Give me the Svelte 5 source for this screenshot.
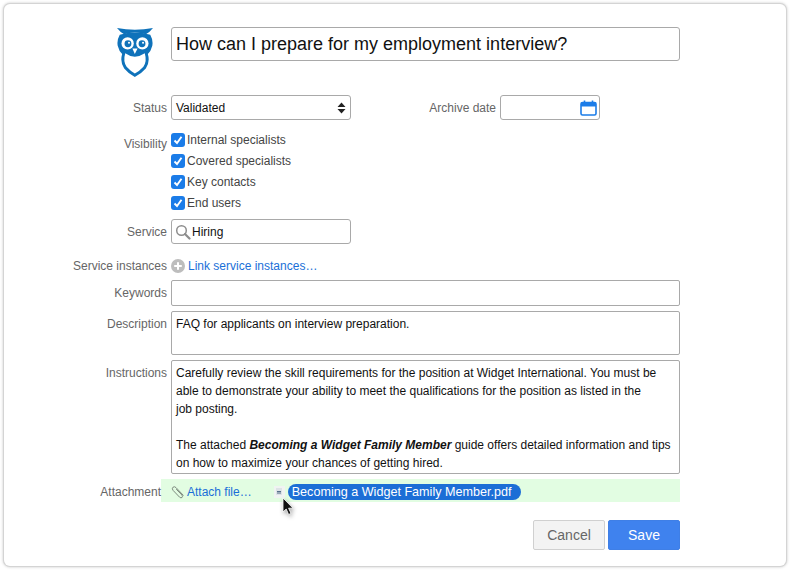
<script>
  let title = 'How can I prepare for my employment interview?';
  const audiences = ['Internal specialists', 'Covered specialists', 'Key contacts', 'End users'];
</script>

<div class="sheet">
  <div class="head">
    <svg class="owl" viewBox="0 0 105 143" aria-hidden="true">
      <path d="M0 0 Q52 10 105 0 Q96 12 84 18 Q52 8 21 18 Q9 12 0 0Z" fill="#0f72ba" />
      <path d="M8 20 Q52 6 97 20 Q106 36 103 52 Q99 68 90 76 Q97 100 84 118 Q70 134 52 143 Q34 134 21 118 Q8 100 15 76 Q6 68 2 52 Q-1 36 8 20Z" fill="#0f72ba" />
      <path d="M24 74 Q38 84 52 84 Q66 84 81 74 Q88 98 77 113 Q65 126 52 133 Q40 126 28 113 Q17 98 24 74Z" fill="#fff" />
      <circle cx="31" cy="45" r="18" fill="#fff" />
      <circle cx="74" cy="45" r="18" fill="#fff" />
      <circle cx="32" cy="46" r="10" fill="#0f72ba" />
      <circle cx="73" cy="46" r="10" fill="#0f72ba" />
      <circle cx="35" cy="43" r="3" fill="#fff" />
      <circle cx="76" cy="43" r="3" fill="#fff" />
      <path d="M45 60 L60 60 L52 76Z" fill="#fff" />
    </svg>
    <input class="title" type="text" bind:value={title} />
  </div>

  <div class="row status-row">
    <span class="label">Status</span>
    <div class="select">
      <span>Validated</span>
      <svg width="9" height="12" viewBox="0 0 9 12"><path d="M4.5 0.5 L8.5 5 H0.5Z M4.5 11.5 L8.5 7 H0.5Z" fill="#222" /></svg>
    </div>
    <span class="label archive">Archive date</span>
    <div class="box date">
      <svg width="17" height="16" viewBox="0 0 17 16" fill="none">
        <rect x="1" y="2.5" width="15" height="12.5" rx="1.5" stroke="#1b7ce8" stroke-width="1.6" />
        <path d="M1 2.5 H16 V6.5 H1Z" fill="#1b7ce8" />
        <path d="M4.5 0.5 V3 M12.5 0.5 V3" stroke="#1b7ce8" stroke-width="1.6" />
      </svg>
    </div>
  </div>

  <div class="row visibility-row">
    <span class="label">Visibility</span>
    <div class="checks">
      {#each audiences as name}
        <div class="check">
          <span class="tick">
            <svg width="10" height="10" viewBox="0 0 10 10" fill="none"><path d="M1.5 5.5 L4 8 L8.5 1.8" stroke="#fff" stroke-width="1.9" /></svg>
          </span>
          {name}
        </div>
      {/each}
    </div>
  </div>

  <div class="row service-row">
    <span class="label">Service</span>
    <div class="box service">
      <svg width="16" height="16" viewBox="0 0 16 16" fill="none">
        <circle cx="6.5" cy="6.5" r="4.8" stroke="#8d8d8d" stroke-width="1.5" />
        <path d="M10 10 L14.5 14.5" stroke="#8d8d8d" stroke-width="2.2" stroke-linecap="round" />
      </svg>
      <span>Hiring</span>
    </div>
  </div>

  <div class="row instances-row">
    <span class="label">Service instances</span>
    <div class="link-line">
      <svg width="14" height="14" viewBox="0 0 14 14"><circle cx="7" cy="7" r="7" fill="#bdbdbd" /><path d="M7 3.2 V10.8 M3.2 7 H10.8" stroke="#fff" stroke-width="2" /></svg>
      <span class="link">Link service instances…</span>
    </div>
  </div>

  <div class="row keywords-row">
    <span class="label">Keywords</span>
    <div class="box wide keywords"></div>
  </div>

  <div class="row description-row">
    <span class="label">Description</span>
    <div class="box wide text description">FAQ for applicants on interview preparation.</div>
  </div>

  <div class="row instructions-row">
    <span class="label">Instructions</span>
    <div class="box wide text instructions">
      Carefully review the skill requirements for the position at Widget International. You must be<br />
      able to demonstrate your ability to meet the qualifications for the position as listed in the<br />
      job posting.<br />
      <br />
      The attached <b><i>Becoming a Widget Family Member</i></b> guide offers detailed information and tips<br />
      on how to maximize your chances of getting hired.
    </div>
  </div>

  <div class="row attachment-row">
    <span class="label">Attachment</span>
    <div class="dropzone">
      <svg class="clip" width="14" height="14" viewBox="0 0 14 14" fill="none">
        <path d="M12.5 10.5 L5 2.6 Q3.4 1 1.9 2.3 Q0.6 3.7 2.1 5.4 L8.6 12.2 Q10 13.4 11.1 12.4 Q12 11.3 10.9 10 L5.2 4.2" stroke="#7d8a7e" stroke-width="1" />
      </svg>
      <span class="link">Attach file…</span>
      <span class="drag-file">
        <svg width="8" height="9" viewBox="0 0 8 9"><rect x="1" y="1" width="6" height="7" fill="#dde3e6" /><path d="M2 4.5 H6 M2 6 H6" stroke="#56708a" /></svg>
      </span>
      <span class="pill">Becoming a Widget Family Member.pdf</span>
      <svg class="cursor" width="13" height="19" viewBox="0 0 13 19">
        <path d="M1 1 V15 L4.2 12 L6.6 17.5 L9 16.4 L6.6 11.2 H11Z" fill="#111" stroke="#fff" stroke-width="0.8" />
      </svg>
    </div>
  </div>

  <div class="actions">
    <button class="cancel">Cancel</button>
    <button class="save">Save</button>
  </div>
</div>

<style>
  :global(body) {
    margin: 0;
    background: #fff;
  }

  .sheet {
    box-sizing: border-box;
    width: 782px;
    height: 562px;
    margin: 4px;
    padding: 22px 106px 0 0;
    border-radius: 6px;
    background: #fff;
    box-shadow: 0 0 0 1px #d4d4d4, 0 0 3px 1px rgba(0, 0, 0, 0.22);
    font-family: "Liberation Sans", Arial, sans-serif;
    font-size: 12px;
    color: #222;
  }

  .head {
    display: flex;
    align-items: flex-start;
    gap: 16px;
    padding-left: 113px;
    height: 64px;
    margin-top: 1px;
  }

  .owl {
    width: 36px;
    height: 49px;
    flex: none;
    margin-top: 1px;
    margin-right: 2px;
  }

  .title {
    box-sizing: border-box;
    width: 509px;
    height: 34px;
    padding: 0 4px;
    border: 1px solid #a9a9a9;
    border-radius: 3px;
    outline: none;
    font: 18px "Liberation Sans", Arial, sans-serif;
    color: #111;
  }

  .row {
    display: flex;
    align-items: flex-start;
    gap: 4px;
  }

  .label {
    flex: none;
    width: 163px;
    text-align: right;
    color: #666;
    white-space: nowrap;
  }

  .box {
    box-sizing: border-box;
    border: 1px solid #a9a9a9;
    border-radius: 2px;
    background: #fff;
  }

  .wide {
    width: 509px;
  }

  .text {
    padding: 3px 4px;
    line-height: 18px;
    color: #111;
    white-space: nowrap;
  }

  .status-row {
    height: 25px;
    margin-top: 4px;
    align-items: center;
  }

  .select {
    box-sizing: border-box;
    width: 180px;
    height: 25px;
    padding: 0 4px;
    display: flex;
    align-items: center;
    justify-content: space-between;
    border: 1px solid #a9a9a9;
    border-radius: 3px;
    color: #111;
  }

  .archive {
    width: 141px;
  }

  .date {
    width: 100px;
    height: 25px;
    display: flex;
    align-items: center;
    justify-content: flex-end;
    padding-right: 2px;
    border-radius: 3px;
  }

  .visibility-row {
    margin-top: 9px;
  }

  .visibility-row .label {
    margin-top: 8px;
  }

  .checks {
    display: flex;
    flex-direction: column;
  }

  .check {
    height: 21px;
    display: flex;
    align-items: center;
    gap: 2px;
    color: #444;
  }

  .tick {
    width: 14px;
    height: 14px;
    display: flex;
    align-items: center;
    justify-content: center;
    border-radius: 3px;
    background: #1b7ce8;
  }

  .service-row {
    height: 25px;
    margin-top: 6px;
    align-items: center;
  }

  .service {
    width: 180px;
    height: 25px;
    display: flex;
    align-items: center;
    gap: 1px;
    padding-left: 3px;
    border-radius: 3px;
    color: #111;
  }

  .instances-row {
    height: 14px;
    margin-top: 15px;
    align-items: center;
  }

  .link-line {
    display: flex;
    align-items: center;
    gap: 3px;
  }

  .link {
    color: #1a6fd8;
  }

  .keywords-row {
    margin-top: 7px;
  }

  .keywords-row .label {
    margin-top: 6px;
  }

  .keywords {
    height: 26px;
  }

  .description-row {
    margin-top: 5px;
  }

  .description-row .label,
  .instructions-row .label {
    margin-top: 6px;
  }

  .description {
    height: 44px;
  }

  .instructions-row {
    margin-top: 5px;
  }

  .instructions {
    height: 114px;
  }

  .attachment-row {
    position: relative;
    margin-top: 5px;
    height: 23px;
    align-items: center;
  }

  .attachment-row .label {
    width: 157px;
    padding-top: 2px;
    position: relative;
    z-index: 1;
  }

  .dropzone {
    position: relative;
    box-sizing: border-box;
    width: 519px;
    height: 23px;
    display: flex;
    align-items: center;
    padding: 2px 0 0 10px;
    background: #e2fde2;
    margin-left: -4px;
  }

  .clip {
    margin-right: 2px;
  }

  .drag-file {
    width: 11px;
    height: 12px;
    margin-left: 22px;
    display: flex;
    align-items: center;
    justify-content: center;
    background: #f0f4f2;
  }

  .pill {
    margin-left: 3px;
    padding: 0 10px 0 4px;
    height: 16px;
    line-height: 16px;
    border-radius: 8px;
    background: #1c6ed6;
    color: #fff;
    white-space: nowrap;
    font-size: 12.6px;
  }

  .cursor {
    position: absolute;
    left: 121px;
    top: 18px;
    filter: drop-shadow(1px 2px 2px rgba(0, 0, 0, 0.35));
  }

  .actions {
    display: flex;
    justify-content: flex-end;
    gap: 3px;
    margin-top: 18px;
  }

  button {
    height: 30px;
    border-radius: 2px;
    font: 14px "Liberation Sans", Arial, sans-serif;
  }

  .cancel {
    width: 72px;
    border: 1px solid #d0d0d0;
    background: #f3f3f3;
    color: #666;
  }

  .save {
    width: 72px;
    border: 1px solid #3f7fe6;
    background: #3f82ee;
    color: #fff;
  }
</style>
